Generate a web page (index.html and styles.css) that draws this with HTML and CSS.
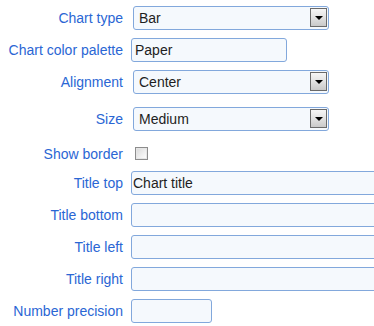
FILE: index.html
```html
<!DOCTYPE html>
<html>
<head>
<meta charset="utf-8">
<link rel="stylesheet" href="styles.css">
</head>
<body>
<div class="form">
  <div class="row">
    <label class="lbl">Chart type</label>
    <div class="combo"><span class="combo-text">Bar</span><span class="combo-btn"><i class="tri"></i></span></div>
  </div>
  <div class="row">
    <label class="lbl">Chart color palette</label>
    <div class="field field-mid">Paper</div>
  </div>
  <div class="row">
    <label class="lbl">Alignment</label>
    <div class="combo"><span class="combo-text">Center</span><span class="combo-btn"><i class="tri"></i></span></div>
  </div>
  <div class="row row-tall">
    <label class="lbl">Size</label>
    <div class="combo"><span class="combo-text">Medium</span><span class="combo-btn"><i class="tri"></i></span></div>
  </div>
  <div class="row row-check">
    <label class="lbl">Show border</label>
    <span class="check"></span>
  </div>
  <div class="row">
    <label class="lbl">Title top</label>
    <div class="field field-wide">Chart title</div>
  </div>
  <div class="row">
    <label class="lbl">Title bottom</label>
    <div class="field field-wide"></div>
  </div>
  <div class="row">
    <label class="lbl">Title left</label>
    <div class="field field-wide"></div>
  </div>
  <div class="row">
    <label class="lbl">Title right</label>
    <div class="field field-wide"></div>
  </div>
  <div class="row">
    <label class="lbl">Number precision</label>
    <div class="field field-small"></div>
  </div>
</div>
</body>
</html>
```
FILE: styles.css
```css
html, body {
  margin: 0;
  padding: 0;
  background: #ffffff;
  overflow: hidden;
}
body {
  font-family: "Liberation Sans", Arial, sans-serif;
  font-size: 14px;
  width: 374px;
  height: 326px;
}
.form {
  padding-top: 2px;
  display: flex;
  flex-direction: column;
}
.row {
  height: 32px;
  display: flex;
  align-items: center;
  gap: 8px;
}
.row-tall { height: 42px; }
.row-check { height: 27px; }
.lbl {
  width: 123px;
  flex: none;
  text-align: right;
  color: #2a66d4;
  white-space: nowrap;
}
.combo {
  margin-left: 2px;
  width: 196px;
  height: 24px;
  box-sizing: border-box;
  border: 1px solid #82a8dc;
  border-radius: 3px;
  background: #f5f9fd;
  display: flex;
  align-items: center;
  justify-content: space-between;
  padding: 1px 1px 2px 5px;
  flex: none;
}
.combo-text {
  color: #1e1e1e;
  line-height: 16px;
}
.combo-btn {
  width: 17px;
  height: 19px;
  box-sizing: border-box;
  border: 1px solid #6a6a6a;
  background: linear-gradient(#f6f6f6, #e4e4e4 45%, #c9c9c9);
  display: flex;
  justify-content: center;
  align-items: flex-start;
  padding-top: 7px;
  margin-top: -1px;
}
.tri {
  display: block;
  width: 0;
  height: 0;
  border-left: 4px solid transparent;
  border-right: 4px solid transparent;
  border-top: 4px solid #000;
}
.field {
  height: 24px;
  box-sizing: border-box;
  border: 1px solid #82a8dc;
  border-radius: 3px;
  background: #f5f9fd;
  color: #1e1e1e;
  line-height: 22px;
  padding-left: 2px;
  flex: none;
  white-space: nowrap;
}
.field-mid { width: 156px; padding-left: 3px; }
.field-wide { width: 260px; padding-left: 1px; }
.field-small { width: 81px; }
.check {
  margin-left: 4px;
  width: 13px;
  height: 13px;
  box-sizing: border-box;
  border: 1px solid #8c8c8c;
  background: linear-gradient(135deg, #d8d8d8, #f4f4f4 70%, #ffffff);
  box-shadow: inset 0 0 0 1px #e6e6e6;
  flex: none;
}
```
